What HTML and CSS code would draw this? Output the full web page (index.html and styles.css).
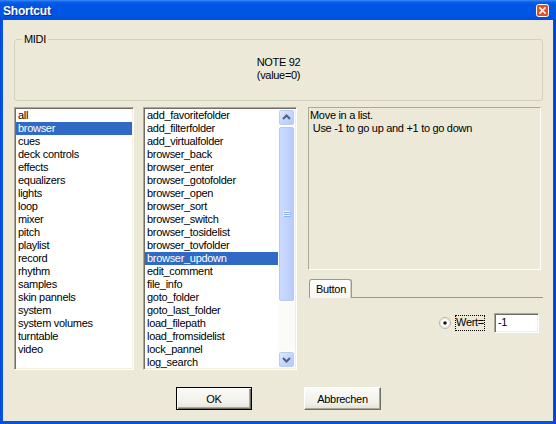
FILE: index.html
```html
<!DOCTYPE html>
<html>
<head>
<meta charset="utf-8">
<title>Shortcut</title>
<link rel="stylesheet" href="styles.css">
</head>
<body>
<div class="window">
  <div class="titlebar">
    <span class="title">Shortcut</span>
    <span class="close">
      <svg width="13" height="13" viewBox="0 0 13 13">
        <rect x="0.5" y="0.5" width="12" height="12" rx="2" fill="#E0512B" stroke="#fff"/>
        <path d="M4 4 L9 9 M9 4 L4 9" stroke="#fff" stroke-width="1.6" stroke-linecap="square"/>
      </svg>
    </span>
  </div>
  <div class="client">
    <div class="group">
      <span class="legend">MIDI</span>
      <div class="midi-text">NOTE 92<br>(value=0)</div>
    </div>

    <div class="main-row">
      <ul class="listbox categories">
        <li>all</li>
        <li class="sel">browser</li>
        <li>cues</li>
        <li>deck controls</li>
        <li>effects</li>
        <li>equalizers</li>
        <li>lights</li>
        <li>loop</li>
        <li>mixer</li>
        <li>pitch</li>
        <li>playlist</li>
        <li>record</li>
        <li>rhythm</li>
        <li>samples</li>
        <li>skin pannels</li>
        <li>system</li>
        <li>system volumes</li>
        <li>turntable</li>
        <li>video</li>
      </ul>

      <div class="listbox actions">
        <ul class="items">
          <li>add_favoritefolder</li>
          <li>add_filterfolder</li>
          <li>add_virtualfolder</li>
          <li>browser_back</li>
          <li>browser_enter</li>
          <li>browser_gotofolder</li>
          <li>browser_open</li>
          <li>browser_sort</li>
          <li>browser_switch</li>
          <li>browser_tosidelist</li>
          <li>browser_tovfolder</li>
          <li class="sel">browser_updown</li>
          <li>edit_comment</li>
          <li>file_info</li>
          <li>goto_folder</li>
          <li>goto_last_folder</li>
          <li>load_filepath</li>
          <li>load_fromsidelist</li>
          <li>lock_pannel</li>
          <li>log_search</li>
        </ul>
        <div class="scrollbar">
          <div class="sb-btn">
            <svg width="15" height="15" viewBox="0 0 15 15"><path d="M4 9 L7.5 5.5 L11 9" fill="none" stroke="#4D6185" stroke-width="2"/></svg>
          </div>
          <div class="sb-track">
            <div class="sb-thumb">
              <svg width="8" height="8" viewBox="0 0 8 8"><path d="M0 1.5 H7 M0 3.5 H7 M0 5.5 H7" stroke="#EEF4FE" stroke-width="1"/><path d="M1 2.5 H8 M1 4.5 H8 M1 6.5 H8" stroke="#8CB0F8" stroke-width="1"/></svg>
            </div>
          </div>
          <div class="sb-btn">
            <svg width="15" height="15" viewBox="0 0 15 15"><path d="M4 6 L7.5 9.5 L11 6" fill="none" stroke="#4D6185" stroke-width="2"/></svg>
          </div>
        </div>
      </div>

      <div class="right-col">
        <div class="desc">Move in a list.<br>&nbsp;Use -1 to go up and +1 to go down</div>
        <div class="tabstrip"><span class="tab">Button</span></div>
        <div class="param-row">
          <span class="radio">
            <svg width="12" height="12" viewBox="0 0 12 12">
              <circle cx="6" cy="6" r="5.5" fill="#fff" stroke="#B9B6A6"/>
              <circle cx="6" cy="6" r="4.5" fill="none" stroke="#E2DFD3"/>
              <circle cx="6" cy="6" r="1.8" fill="#1A1A1A"/>
            </svg>
          </span>
          <span class="radio-label">Wert=</span>
          <span class="field">-1</span>
        </div>
      </div>
    </div>

    <div class="buttons">
      <button class="btn default">OK</button>
      <button class="btn">Abbrechen</button>
    </div>
  </div>
</div>
</body>
</html>
```

FILE: styles.css
```css
body {
  margin: 0;
  font-family: "Liberation Sans", Arial, sans-serif;
  font-size: 11px;
  letter-spacing: -0.3px;
  color: #000;
}

.window {
  width: 556px;
  height: 424px;
  display: flex;
  flex-direction: column;
  background: linear-gradient(90deg, #0A3FD0 0, #0058E8 1px, #0055E5 2px, #0055E5 553px, #0A3FD0 555px);
}

/* caption bar */
.titlebar {
  flex: none;
  height: 20px;
  display: flex;
  align-items: center;
  justify-content: space-between;
  padding: 0 5px 0 3px;
  background: linear-gradient(#3A8CF8 0, #0A5FEA 2px, #0055E5 4px, #0055E5 15px, #004CDB 20px);
  color: #fff;
  font-weight: bold;
  font-size: 12px;
  letter-spacing: -0.2px;
}

.title {
  padding-top: 1px;
  text-shadow: 1px 1px 0 #0A2A8C;
}

.close {
  display: flex;
  margin-top: 1px;
  margin-right: 2px;
}

/* dialog body */
.client {
  flex: 1;
  margin: 0 3px 3px;
  background: #ECE9D8;
  display: flex;
  flex-direction: column;
  padding: 0 10px 0 11px;
}

/* MIDI group box */
.group {
  position: relative;
  margin-top: 19px;
  height: 62px;
  box-sizing: border-box;
  border: 1px solid #D0D0BF;
  border-radius: 3px;
}

.legend {
  position: absolute;
  left: 7px;
  top: -7px;
  padding: 0 2px;
  line-height: 13px;
  background: #ECE9D8;
}

.midi-text {
  padding-top: 16px;
  line-height: 13px;
  text-align: center;
}

/* lists + right column */
.main-row {
  margin-top: 6px;
  height: 263px;
  display: flex;
}

.listbox {
  box-sizing: border-box;
  height: 263px;
  margin: 0;
  padding: 1px;
  list-style: none;
  background: #fff;
  border: 1px solid;
  border-color: #ACA899 #fff #fff #ACA899;
  box-shadow: inset 1px 1px 0 #716F64, inset -1px -1px 0 #F1EFE2;
  overflow: hidden;
}

.listbox li {
  height: 13px;
  line-height: 13px;
  padding-left: 2px;
  white-space: nowrap;
}

.listbox li.sel {
  background: #316AC5;
  color: #fff;
}

.categories {
  width: 120px;
  flex: none;
}

.actions {
  width: 154px;
  flex: none;
  margin-left: 9px;
  display: flex;
}

.actions .items {
  flex: 1;
  margin: 0;
  padding: 0;
  list-style: none;
  overflow: hidden;
}

/* vertical scrollbar */
.scrollbar {
  width: 17px;
  flex: none;
  display: flex;
  flex-direction: column;
  background: #FBFBF8;
}

.sb-btn {
  height: 17px;
  flex: none;
  box-sizing: border-box;
  display: flex;
  align-items: center;
  justify-content: center;
  border: 1px solid #fff;
  border-radius: 3px;
  background: linear-gradient(135deg, #E4ECFE 0, #C6D6FC 50%, #B4C9F8 100%);
  box-shadow: inset 0 0 0 1px #B8CCF6;
}

.sb-track {
  flex: 1;
  display: flex;
  flex-direction: column;
}

.sb-thumb {
  height: 176px;
  box-sizing: border-box;
  display: flex;
  align-items: center;
  justify-content: center;
  border: 1px solid #fff;
  border-radius: 3px;
  background: linear-gradient(90deg, #CCDAFD 0, #C3D4FC 50%, #B6CAF8 100%);
  box-shadow: inset 0 0 0 1px #B5C9F6;
}

.right-col {
  flex: 1;
  margin-left: 11px;
  display: flex;
  flex-direction: column;
}

.desc {
  width: 233px;
  height: 163px;
  box-sizing: border-box;
  border: 1px solid;
  border-color: #ACA899 #fff #fff #ACA899;
  padding: 1px 0 0 1px;
  line-height: 13px;
}

/* tab control */
.tabstrip {
  margin-top: 9px;
  margin-left: 1px;
  display: flex;
  border-bottom: 1px solid #919B9C;
}

.tab {
  height: 19px;
  box-sizing: border-box;
  line-height: 18px;
  padding: 0 5px 0 6px;
  margin-bottom: -1px;
  border: 1px solid #919B9C;
  border-bottom: none;
  border-radius: 3px 3px 0 0;
  background: linear-gradient(#FFFFFF, #F7F6F1);
  box-shadow: inset -1px 0 0 #D6D3C6;
}

.param-row {
  margin-top: 15px;
  margin-right: 4px;
  display: flex;
  justify-content: flex-end;
  align-items: center;
}

.radio {
  display: flex;
  margin-right: 4px;
}

.radio-label {
  padding: 1px 1px 2px;
  line-height: 13px;
  outline: 1px dotted #000;
  outline-offset: -1px;
  margin-right: 9px;
}

.field {
  width: 45px;
  height: 20px;
  box-sizing: border-box;
  padding: 2px 0 0 3px;
  line-height: 13px;
  background: #fff;
  border: 1px solid;
  border-color: #ACA899 #fff #fff #ACA899;
  box-shadow: inset 1px 1px 0 #716F64, inset -1px -1px 0 #F1EFE2;
}

/* dialog buttons */
.buttons {
  margin-top: 17px;
  display: flex;
  justify-content: center;
  gap: 52px;
}

.btn {
  font: inherit;
  letter-spacing: -0.3px;
  color: #000;
  height: 23px;
  padding: 0;
  box-sizing: border-box;
  background: linear-gradient(#FBFBF7, #F1F0EA 70%, #E4E2D6);
  border: 1px solid;
  border-color: #FFFFFF #716F64 #716F64 #FFFFFF;
  box-shadow: inset -1px -1px 0 #ACA899;
  width: 77px;
}

.btn.default {
  width: 76px;
  border: 1px solid #000;
  box-shadow: inset 1px 1px 0 #fff, inset -1px -1px 0 #716F64, inset -2px -2px 0 #ACA899;
}
```
